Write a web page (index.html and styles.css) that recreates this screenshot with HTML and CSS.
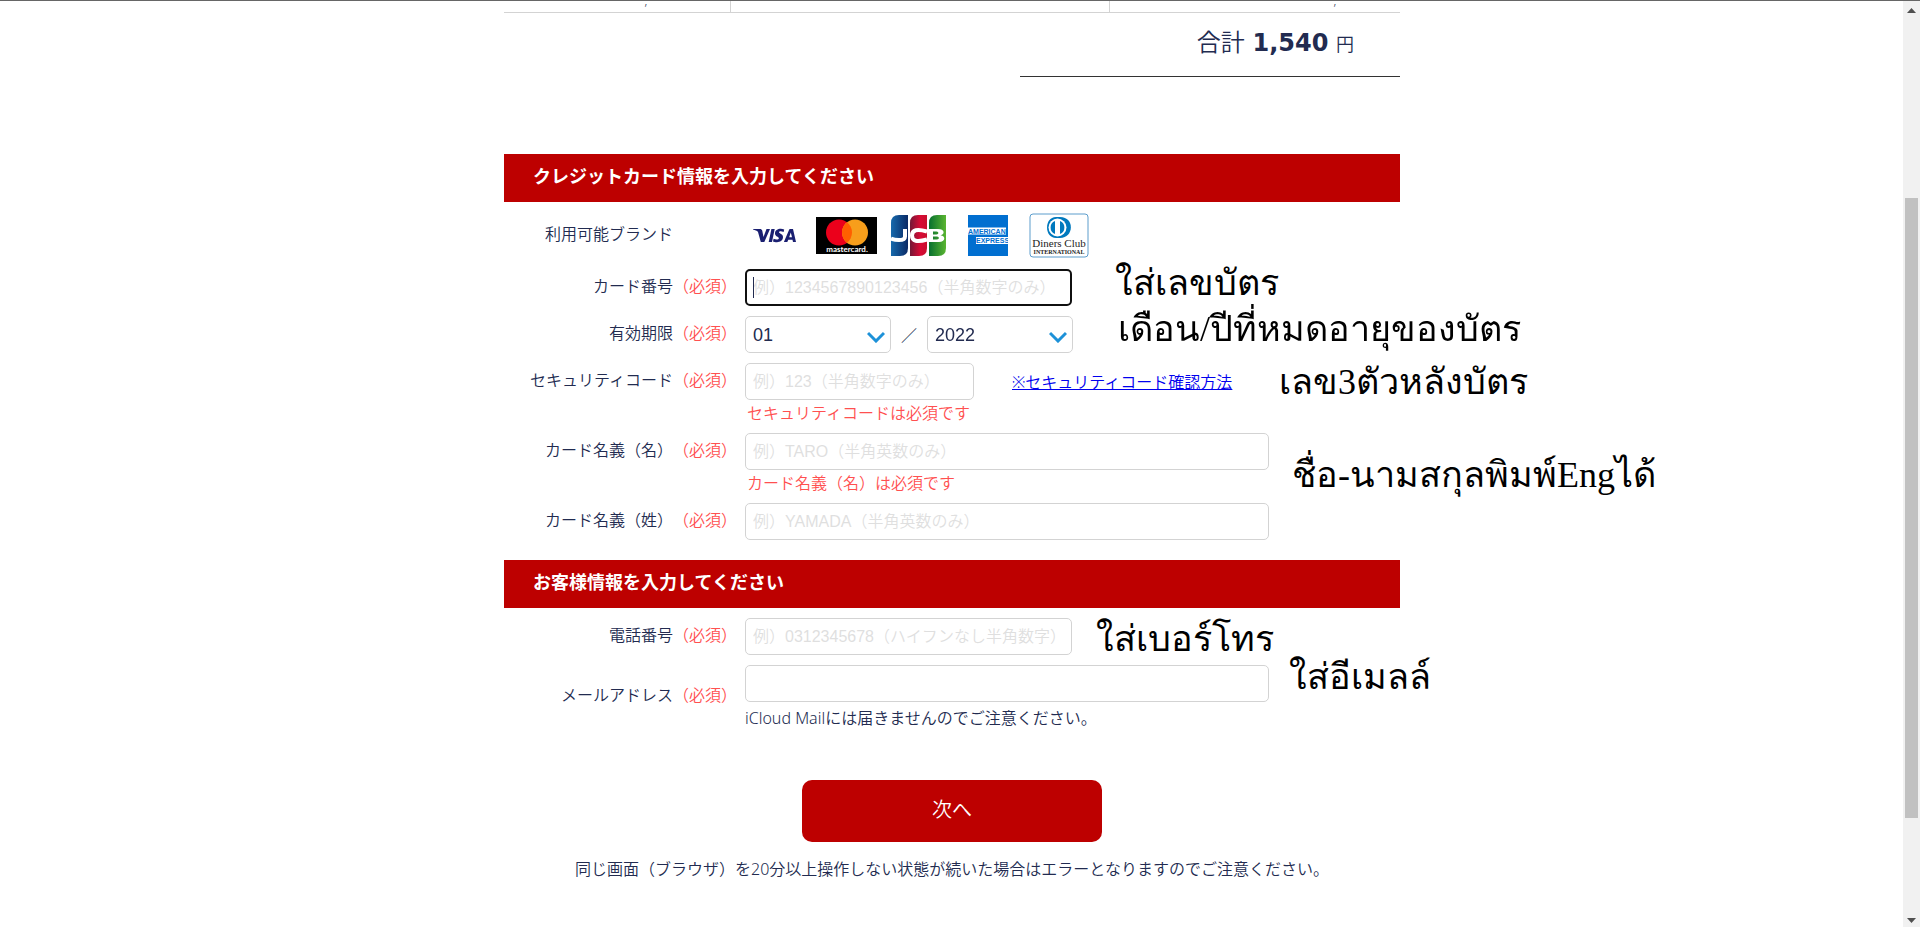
FILE: index.html
```html
<!DOCTYPE html>
<html lang="ja">
<head>
  <meta charset="UTF-8">
  <meta name="viewport" content="width=device-width, initial-scale=1.0">
  <title>お支払い情報の入力</title>
  <link rel="stylesheet" href="styles.css">
</head>
<body>
  <main class="page">
    <table class="items">
      <tr><td class="item-code">,</td><td class="item-name"></td><td class="item-price">,</td></tr>
    </table>
    <p class="total">合計 <strong>1,540</strong> <small>円</small></p>

    <form class="form">
      <h2 class="heading">クレジットカード情報を入力してください</h2>
      <div class="row brand-row">
        <span class="label no-mark">利用可能ブランド</span>
        <div class="brands">
          <svg class="visa" width="44" height="16" viewBox="0 0 44 16" role="img" aria-label="VISA">
            <path fill="#1a1f71" d="M0 1h7c1 0 2 .6 2.200 1.600L10.500 9 13.500 1H17L11.300 14H7.800L5 4C4 2.800 2 2 0 1.600z"/>
            <path fill="#1a1f71" d="M18.400 1h3.300L19 14h-3.300z"/>
            <path fill="#1a1f71" d="M31.200 1.500 30.600 4c-2.400-1-4.500-.8-4.600.3 0 1.300 4 1.500 4 4.700 0 3.400-2.800 5.200-6 5.200-1.800 0-3.200-.4-4-.8l.6-2.600c2.400 1.200 5.200 1 5.300-.6.100-1.600-3.900-1.700-3.900-4.800C22 1.400 27-.2 31.200 1.500z"/>
            <path fill="#1a1f71" fill-rule="evenodd" d="M37 1h3l3 13h-3l-.5-2.200h-4.200L34.300 14h-3.400L36 2c.2-.6.500-1 1-1zm.800 3.500L36.200 9.200H39z"/>
          </svg>
          <svg class="mastercard" width="61" height="37" viewBox="0 0 61 37" role="img" aria-label="mastercard">
            <path d="M0 0h61v37H0z"/>
            <circle cx="23" cy="15.500" r="13" fill="#eb001b"/>
            <circle cx="39" cy="15.500" r="13" fill="#f79e1b"/>
            <path fill="#ff5f00" d="M31 5.250a13 13 0 0 1 0 20.500 13 13 0 0 1 0-20.500z"/>
            <text x="31" y="35" class="mc-text">mastercard.</text>
          </svg>
          <svg class="jcb" width="55" height="41" viewBox="0 0 55 41" role="img" aria-label="JCB">
            <defs>
              <linearGradient id="jcb-blue"><stop offset="0" stop-color="#1669ac"/><stop offset="1" stop-color="#0a2a66"/></linearGradient>
              <linearGradient id="jcb-red"><stop offset="0" stop-color="#731836"/><stop offset=".6" stop-color="#d80b35"/><stop offset="1" stop-color="#c8102e"/></linearGradient>
              <linearGradient id="jcb-green"><stop offset="0" stop-color="#08702f"/><stop offset="1" stop-color="#5ab531"/></linearGradient>
            </defs>
            <path fill="url(#jcb-blue)" d="M8 0h9v33q0 8-8 8H0V8q0-8 8-8z"/>
            <path fill="url(#jcb-red)" d="M27 0h9v33q0 8-8 8h-9V8q0-8 8-8z"/>
            <path fill="url(#jcb-green)" d="M46 0h9v33q0 8-8 8h-9V8q0-8 8-8z"/>
            <g fill="none" stroke="#fff" stroke-width="4">
              <path d="M14 14v7.500Q14 25 8 25q-4.500 0-8-1.500"/>
              <path d="M36 16.500Q21 12 21 20.500T36 24.500"/>
            </g>
            <path fill="#fff" fill-rule="evenodd" d="M38 14h9c7 0 7 5.500 2.500 6.300 5.500.7 5 6.700-1.500 6.700H38zm4 2.500v3h3.500c2.500 0 2.500-3 0-3zm0 5v3H46c2.500 0 2.500-3 0-3z"/>
          </svg>
          <svg class="amex" width="40" height="41" viewBox="0 0 40 41" role="img" aria-label="American Express">
            <path fill="#016fd0" d="M0 0h40v41H0z"/>
            <path fill="#fff" d="M0 12.500h38v7H0zM8 22h32v7H8z"/>
            <text x="0" y="18.500" class="amex-text">AMERICAN</text>
            <text x="8" y="28" class="amex-text">EXPRESS</text>
          </svg>
          <svg class="diners" width="60" height="45" viewBox="0 0 60 45" role="img" aria-label="Diners Club International">
            <rect x="1" y="1" width="58" height="43" rx="3" fill="#fff" stroke="#5c9dcc"/>
            <path fill="#0079be" d="M27 4h4c15 0 14 21 0 21h-4C15 25 15 4 27 4z"/>
            <circle cx="28.500" cy="14.500" r="9" fill="#fff"/>
            <path fill="#0079be" d="M26 8v13a7 7 0 0 1 0-13zM31 8v13a7 7 0 0 0 0-13z"/>
            <text x="30" y="34" class="diners-name">Diners Club</text>
            <text x="30" y="41" class="diners-sub">INTERNATIONAL</text>
          </svg>
        </div>
      </div>
      <div class="row">
        <label class="label" for="card">カード番号<em>（必須）</em></label>
        <div class="caret">
          <input class="box medium" id="card" type="text" placeholder="例）1234567890123456（半角数字のみ）" autofocus>
        </div>
      </div>
      <div class="row">
        <label class="label" for="month">有効期限<em>（必須）</em></label>
        <div class="expiry">
          <span class="select"><select class="box" id="month"><option>01</option></select><svg class="arrow" width="18" height="12" viewBox="0 0 18 12"><path d="M1 2l8 8 8-8"/></svg></span>
          <span>／</span>
          <span class="select"><select class="box" id="year" aria-label="年"><option>2022</option></select><svg class="arrow" width="18" height="12" viewBox="0 0 18 12"><path d="M1 2l8 8 8-8"/></svg></span>
        </div>
      </div>
      <div class="row">
        <label class="label" for="cvc">セキュリティコード<em>（必須）</em></label>
        <div>
          <div class="cvc-line">
            <input class="box short" id="cvc" type="text" placeholder="例）123（半角数字のみ）">
            <a href="#">※セキュリティコード確認方法</a>
          </div>
          <p class="error">セキュリティコードは必須です</p>
        </div>
      </div>
      <div class="row">
        <label class="label" for="first">カード名義（名）<em>（必須）</em></label>
        <div>
          <input class="box long" id="first" type="text" placeholder="例）TARO（半角英数のみ）">
          <p class="error">カード名義（名）は必須です</p>
        </div>
      </div>
      <div class="row">
        <label class="label" for="last">カード名義（姓）<em>（必須）</em></label>
        <input class="box long" id="last" type="text" placeholder="例）YAMADA（半角英数のみ）">
      </div>

      <h2 class="heading second">お客様情報を入力してください</h2>
      <div class="row">
        <label class="label" for="tel">電話番号<em>（必須）</em></label>
        <input class="box medium" id="tel" type="tel" placeholder="例）0312345678（ハイフンなし半角数字）">
      </div>
      <div class="row mail-row">
        <label class="label" for="mail">メールアドレス<em>（必須）</em></label>
        <div>
          <input class="box long" id="mail" type="email">
          <p class="hint">iCloud Mailには届きませんのでご注意ください。</p>
        </div>
      </div>
      <button class="next" type="submit">次へ</button>
      <p class="notice">同じ画面（ブラウザ）を20分以上操作しない状態が続いた場合はエラーとなりますのでご注意ください。</p>
    </form>

    <!-- notes laid over the form -->
    <div class="notes" lang="th">
      <p class="note note-card">ใส่เลขบัตร</p>
      <p class="note note-expiry">เดือน/ปีที่หมดอายุของบัตร</p>
      <p class="note note-cvc">เลข3ตัวหลังบัตร</p>
      <p class="note note-name">ชื่อ-นามสกุลพิมพ์Engได้</p>
      <p class="note note-tel">ใส่เบอร์โทร</p>
      <p class="note note-mail">ใส่อีเมลล์</p>
    </div>
  </main>

  <div class="scrollbar" aria-hidden="true">
    <svg width="9" height="5" viewBox="0 0 9 5"><path d="M0 5l4.500-5L9 5z"/></svg>
    <div class="track"><div class="thumb"></div></div>
    <svg width="9" height="5" viewBox="0 0 9 5"><path d="M0 0l4.500 5L9 0z"/></svg>
  </div>
</body>
</html>
```
FILE: styles.css
```css
* { margin: 0; padding: 0; box-sizing: border-box; }
html { overflow: hidden; }
body {
  background: #fff;
  border-top: 1px solid #666;
  padding-right: 16px;
  color: #222b50;
  font-family: "Noto Sans", "Noto Sans CJK JP", sans-serif;
  font-size: 16px;
  font-weight: 350;
  line-height: 24px;
  text-spacing-trim: space-all;
}
.page {
  position: relative;
  max-width: 896px;
  margin: 0 auto;
}

/* order summary */
.items {
  width: 100%;
  height: 12px;
  border-collapse: collapse;
  border-bottom: 1px solid #d3d3d3;
  table-layout: fixed;
  font-size: 12px;
  line-height: 0;
}
.items td { text-align: center; vertical-align: top; }
.items td + td { border-left: 1px solid #d3d3d3; }
.item-code { width: 226px; }
.item-price { width: 291px; }
.items .item-code { padding-left: 58px; }
.items .item-price { padding-left: 160px; }
.total {
  width: 380px;
  height: 64px;
  margin-left: auto;
  padding: 12px 46px 0 0;
  border-bottom: 1px solid #333;
  text-align: right;
  font-family: "DejaVu Sans", "Noto Sans CJK JP", sans-serif;
  font-size: 24px;
  line-height: 36px;
}
.total strong { font-weight: 700; }
.total small { font-size: 18px; }

/* form */
.form { padding-top: 77px; }
.heading {
  padding: 10px 29px 14px;
  margin-bottom: 10px;
  background: #bd0000;
  color: #fff;
  font-size: 18px;
  line-height: 24px;
}
.second { margin-top: 20px; }
.row {
  display: flex;
  align-items: flex-start;
  gap: 8px;
  margin-bottom: 10px;
}
.label {
  width: 233px;
  line-height: 34px;
  text-align: right;
}
.label em { color: #ff5050; font-style: normal; }
.no-mark { padding: 0 64px 4px 0; }
.brand-row { height: 47px; align-items: center; }
.mail-row { align-items: center; }
.mail-row .label { padding-bottom: 2px; }
.box {
  display: block;
  height: 37px;
  padding: 0 7px;
  border: 1px solid #d3d3d3;
  border-radius: 5px;
  background: #fff;
  color: #222b50;
  font-family: "Liberation Sans", "Noto Sans CJK JP", sans-serif;
  font-size: 16px;
}
.box::placeholder { color: #dfdfdf; opacity: 1; font-weight: 350; }
.box:focus {
  padding: 0 6px;
  border: 2px solid #101010;
  outline: none;
  caret-color: transparent;
}
.caret { position: relative; }
.caret:focus-within::after {
  content: "";
  position: absolute;
  left: 8px;
  top: 8px;
  width: 1px;
  height: 21px;
  background: #222b50;
}
.short { width: 229px; }
.medium { width: 327px; }
.long { width: 524px; }
.expiry { display: flex; align-items: center; gap: 10px; }
.select { position: relative; }
.select select {
  width: 146px;
  font-size: 18px;
  appearance: none;
}
.arrow {
  position: absolute;
  right: 6px;
  top: 15px;
  fill: none;
  stroke: #1d91d8;
  stroke-width: 3;
  pointer-events: none;
}
.cvc-line { display: flex; align-items: center; gap: 38px; }
.cvc-line a { color: #0000ee; }
.error { padding: 2px 0 0 2px; margin-bottom: -2px; color: #ff5050; line-height: 23px; }
.hint { padding-top: 4px; margin-bottom: -4px; }
.next {
  display: block;
  width: 300px;
  height: 62px;
  margin: 54px auto 15px;
  padding-bottom: 6px;
  border: 0;
  border-radius: 10px;
  background: #bd0000;
  color: #fff;
  font-family: inherit;
  font-size: 20px;
  font-weight: 350;
}
.notice { text-align: center; }

/* card brands */
.brands { display: flex; align-items: center; padding-left: 8px; }
.mastercard { margin-left: 19px; }
.jcb { margin-left: 14px; }
.amex { margin-left: 22px; }
.diners { margin-left: 21px; }
.mc-text { fill: #fff; font: 700 8px "Lato", sans-serif; text-anchor: middle; }
.amex-text { fill: #016fd0; font: 700 7px "Liberation Sans", sans-serif; }
.diners-name { fill: #222; font: 11px "Liberation Serif", serif; text-anchor: middle; }
.diners-sub { fill: #222; font: 700 6px "Liberation Serif", serif; text-anchor: middle; }

/* overlaid notes */
.note {
  position: absolute;
  color: #000;
  font-family: "Liberation Serif", serif;
  font-size: 36px;
  line-height: 48px;
  white-space: nowrap;
}
.note-card { left: 611px; top: 258px; }
.note-expiry { left: 614px; top: 304px; }
.note-cvc { left: 775px; top: 357px; }
.note-name { left: 788px; top: 450px; }
.note-tel { left: 592px; top: 614px; }
.note-mail { left: 785px; top: 652px; }

/* scrollbar */
.scrollbar {
  position: fixed;
  top: 1px;
  right: 0;
  bottom: 0;
  width: 17px;
  padding: 7px 0 4px;
  display: flex;
  flex-direction: column;
  align-items: center;
  background: #f1f1f1;
  fill: #505050;
}
.track { flex: 1; width: 13px; padding: 185px 0 100px; }
.thumb { height: 100%; background: #c1c1c1; }
```
